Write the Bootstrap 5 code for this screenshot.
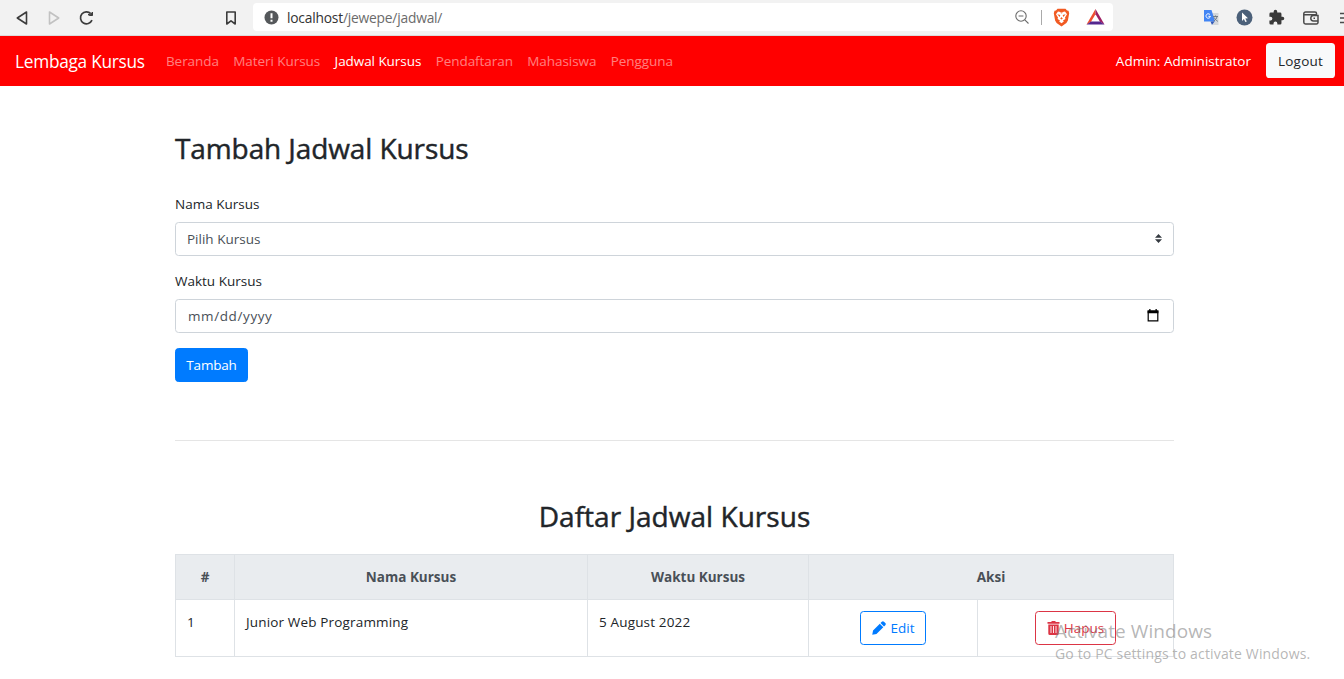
<!DOCTYPE html>
<html lang="id">
<head>
<meta charset="utf-8">
<meta name="viewport" content="width=device-width, initial-scale=1">
<title>Jadwal Kursus</title>
<link href="https://cdn.jsdelivr.net/npm/bootstrap@5.3.0/dist/css/bootstrap.min.css" rel="stylesheet">
<style>
:root{font-size:14.4px}
html,body{overflow:hidden}
body{font-family:"Open Sans","Noto Sans",sans-serif;font-size:13.5px;line-height:21.6px;color:#212529;background:#fff;height:679px}
.screen{width:1349px}
svg{display:block;flex:none}
.toolbar{height:36px;background:#f2f2f2;border-bottom:1px solid #dcdcdc;padding:0 0 0 15px}
.address{flex:none;width:860px;height:28px;margin:-1px 0 0 14px;background:#fff;border-radius:4px;padding:0 8px 0 11px;font-size:13.8px;color:#6b6b6b}
.address b{font-weight:400;color:#333}
.address .url{letter-spacing:-.21px;margin-left:8px;padding-top:1px}
.divider{width:1px;height:15px;background:#aaa;margin:0 11px}
.topnav{height:50px;background:red;padding:0 14px}
.topnav .navbar-brand{font-size:17.3px;margin-right:14px;padding:2px 0 0 1px;letter-spacing:-.28px}
.topnav .nav-link{padding:2px 7.2px 0;color:rgba(255,255,255,.5);white-space:nowrap;letter-spacing:-.06px}
.topnav .nav-link.active{color:#fff}
.who{padding-top:2px}
.logout{width:69px;height:35px;background:#f8f9fa;color:#212529;margin:-1px 0 0 15px;padding-top:1px;letter-spacing:.25px}
.btn{--bs-btn-font-size:13.5px;--bs-btn-padding-x:0;--bs-btn-padding-y:0;--bs-btn-border-radius:3.6px;display:inline-flex;align-items:center;justify-content:center}
.content{width:999px;margin-left:175px;padding-top:45px}
h2{font-size:28px;font-weight:500;line-height:34px;margin:0;-webkit-text-stroke:.45px #212529}
.title-add{letter-spacing:-.1px}
.title-list{letter-spacing:.03px}
.content label{display:block;line-height:22px;margin-bottom:7px}
.field{height:34px;border:1px solid #ced4da;border-radius:3.6px;color:#495057;padding:0 14px 0 11px}
.field span{padding-top:1px}
.field .date{letter-spacing:.6px;padding-left:1px}
.arrows{margin:-2px -3px 0 0}
.calendar{margin-top:-2px}
.add{width:73px;height:34px;--bs-btn-bg:#007bff;--bs-btn-border-color:#007bff;letter-spacing:-.2px}
.rule{height:1px;background:#e5e5e5;margin:58px 0}
.schedule{table-layout:fixed;width:998px;margin:21px 0 0;border-color:#dee2e6;font-size:13.5px;color:#212529}
.schedule th{height:45px;padding:2px 0 0;text-align:center;vertical-align:middle;background:#e9ecef;color:#495057;font-weight:700;border-bottom-width:1px}
.schedule td{height:57px;padding:12px 11px 10px;vertical-align:top;letter-spacing:.16px}
.schedule td.action{text-align:center;padding:11px 0 0;letter-spacing:0}
.edit{width:66px;height:34px;--bs-btn-color:#007bff;--bs-btn-border-color:#007bff;gap:5px}
.delete{width:81px;height:34px;--bs-btn-color:#dc3545;--bs-btn-border-color:#dc3545;gap:4px}
.watermark{position:absolute;left:1055px;top:619px;color:rgba(120,120,120,.55);white-space:nowrap}
.watermark .first{font-size:19px;line-height:24px;letter-spacing:.08px}
.watermark .second{font-size:14px;line-height:22px;letter-spacing:.16px}
</style>
</head>
<body>
<div class="screen">
<div class="toolbar d-flex align-items-center">
  <svg width="14" height="16" viewBox="0 0 14 16" fill="none" stroke="#3c3c3c" stroke-width="1.6" stroke-linejoin="round"><path d="M11.500 2v12L2.300 8z"/></svg>
  <svg style="margin-left:18px" width="14" height="16" viewBox="0 0 14 16" fill="none" stroke="#c2c2c2" stroke-width="1.6" stroke-linejoin="round"><path d="M2.500 2v12L11.700 8z"/></svg>
  <svg style="margin-left:16px" width="18" height="18" viewBox="0 0 18 18" fill="none" stroke="#3c3c3c" stroke-width="1.700"><path d="M15 11.200A6 6 0 1 1 13.800 4.600"/><path d="M11 5.500q3 1.500 4.500-2.500v3.500h-3z" fill="#3c3c3c" stroke-width="1"/></svg>
  <svg style="margin-left:128px" width="16" height="18" viewBox="0 0 16 18" fill="none" stroke="#3c3c3c" stroke-width="1.600" stroke-linejoin="round"><path d="M3.800 3h8.400v12L8 11.800 3.800 15z"/></svg>
  <div class="address d-flex align-items-center">
    <svg width="15" height="15" viewBox="0 0 15 15"><circle cx="7.500" cy="7.500" r="7" fill="#55585b"/><path d="M7.500 3.200v5M7.500 9.800v2" stroke="#fff" stroke-width="2"/></svg>
    <span class="url"><b>localhost</b>/jewepe/jadwal/</span>
    <svg class="ms-auto" width="16" height="16" viewBox="0 0 16 16" fill="none" stroke="#6b6b6b" stroke-width="1.100"><circle cx="7" cy="7" r="5.200"/><path d="M4.600 7h4.800M10.800 10.800l3.700 3.700"/></svg>
    <span class="divider"></span>
    <svg width="17" height="19" viewBox="0 0 17 19"><path d="M4.500.8h8l1.500 1.700 1.500.3.700 2.500-1.300 7.200-1.500 2.500-4.900 3.600-4.900-3.600-1.500-2.500L.8 5.300l.7-2.500L3 2.500z" fill="#f15a22"/><path d="M5 3.600l3.500.6 3.500-.6 2 2.600-2 3.200.4 1.600-2.400 1.600.8 1-2.300 1.700-2.300-1.700.8-1-2.400-1.600.4-1.600-2-3.200z" fill="#fff"/><path d="M4.300 6.300l3 .8-.6 2zM12.700 6.300l-3 .8.600 2zM8.500 9l1.300 1.700-1.300.8-1.300-.8zM7 4.500h3l-1.500 1z" fill="#f15a22"/></svg>
    <svg style="margin-left:16px" width="19" height="18" viewBox="0 0 19 18"><path d="M9.500 1L.5 16.500l4.500-2.800 4.500-7.500z" fill="#f04e30"/><path d="M9.500 1l9 15.500-4.500-2.800-4.500-7.500z" fill="#9e1f63"/><path d="M.5 16.500h18L14 13.500H5z" fill="#54278f"/></svg>
  </div>
  <svg style="margin-left:90px" width="17" height="17" viewBox="0 0 17 17"><path d="M7 4h8.500v12H10z" fill="#d4d7da"/><path d="M1 1h7.500l3.600 11.500H1z" fill="#4285f4"/><path d="M7.500 12.500h4L9 16z" fill="#3057b5"/><path d="M10 7.500h5M12.500 6.500v1M14 7.500c-.3 2-1.500 3.500-3.200 4.500M11.200 8.500c.7 1.700 2 3 3.600 3.800" fill="none" stroke="#737c85" stroke-width="1"/><path d="M7 5.700a2.200 2.200 0 1 0 .4 1.600H5.400" fill="none" stroke="#fff" stroke-width="1"/></svg>
  <svg style="margin-left:16px" width="17" height="17" viewBox="0 0 17 17"><circle cx="8.500" cy="8.500" r="8" fill="#4b6079"/><path d="M6 3.500l6 5.700-2.700.2 1.500 3-1.400.7-1.500-3L6 12z" fill="#fff"/></svg>
  <svg style="margin-left:15px" width="17" height="17" viewBox="0 0 24 24" fill="#3a3a3a"><path d="M20.500 11H19V7a2 2 0 0 0-2-2h-4V3.500a2.500 2.500 0 0 0-5 0V5H4a2 2 0 0 0-2 2v3.800h1.500a2.700 2.700 0 0 1 0 5.400H2V20a2 2 0 0 0 2 2h3.800v-1.500a2.700 2.700 0 0 1 5.400 0V22H17a2 2 0 0 0 2-2v-4h1.500a2.500 2.500 0 0 0 0-5z"/></svg>
  <svg style="margin-left:17px" width="18" height="16" viewBox="0 0 18 16" fill="none" stroke="#4a4a4a" stroke-width="1.500"><path d="M14.500 5V3.500A1.500 1.500 0 0 0 13 2H3.500a1.700 1.700 0 0 0-1.700 1.700v8.600A1.700 1.700 0 0 0 3.500 14h11a1.500 1.500 0 0 0 1.500-1.500V5.500H11.500a2.700 2.700 0 0 0 0 5.400H16M2 4.800h13"/><path d="M11.500 8.200h1.500"/></svg>
  <svg style="margin-left:20px" width="12" height="14" viewBox="0 0 12 14" stroke="#4a4a4a" stroke-width="1.600"><path d="M0 2.500h12M0 7h12M0 11.500h12"/></svg>
</div>

<nav class="navbar navbar-expand topnav flex-nowrap">
  <a class="navbar-brand text-white" href="#">Lembaga Kursus</a>
  <div class="navbar-nav me-auto">
    <a class="nav-link" href="#">Beranda</a>
    <a class="nav-link" href="#">Materi Kursus</a>
    <a class="nav-link active" href="#">Jadwal Kursus</a>
    <a class="nav-link" href="#">Pendaftaran</a>
    <a class="nav-link" href="#">Mahasiswa</a>
    <a class="nav-link" href="#">Pengguna</a>
  </div>
  <span class="text-white who">Admin: Administrator</span>
  <a class="btn logout" href="#">Logout</a>
</nav>

<main class="content">
  <h2 class="title-add">Tambah Jadwal Kursus</h2>
  <form style="padding-top:28px">
    <label>Nama Kursus</label>
    <div class="field d-flex align-items-center justify-content-between" style="margin-bottom:14px">
      <span>Pilih Kursus</span>
      <svg class="arrows" width="7" height="9" viewBox="0 0 7 9" fill="#343a40"><path d="M0 3.700L3.500 0 7 3.700zM0 5.300h7L3.500 9z"/></svg>
    </div>
    <label>Waktu Kursus</label>
    <div class="field d-flex align-items-center justify-content-between" style="margin-bottom:15px">
      <span class="date">mm/dd/yyyy</span>
      <svg class="calendar" width="12" height="13" viewBox="0 0 12 13"><path d="M1.200 2h9.600v9.800H1.200z" fill="none" stroke="#000" stroke-width="1.200"/><path d="M.6 1.400h10.800v2.800H.6zM2.200 0h1.300v2H2.200zM8.500 0h1.300v2H8.500z"/></svg>
    </div>
    <button type="button" class="btn btn-primary add">Tambah</button>
  </form>
  <div class="rule"></div>
  <h2 class="text-center title-list">Daftar Jadwal Kursus</h2>
  <table class="table table-bordered schedule">
    <colgroup><col style="width:59px"><col style="width:353px"><col style="width:221px"><col style="width:169px"><col style="width:196px"></colgroup>
    <thead><tr><th>#</th><th>Nama Kursus</th><th>Waktu Kursus</th><th colspan="2">Aksi</th></tr></thead>
    <tbody><tr>
      <td>1</td><td>Junior Web Programming</td><td>5 August 2022</td>
      <td class="action"><a class="btn btn-outline-primary edit" href="#"><svg width="14" height="14" viewBox="0 0 16 16" fill="currentColor"><path d="M11.200.8a1.800 1.800 0 0 1 2.500 0l1.500 1.500a1.800 1.800 0 0 1 0 2.500L13.700 6.300 9.700 2.300zM8.900 3.100l4 4-7.800 7.700L.3 15.800l.9-4.900z"/></svg><span>Edit</span></a></td>
      <td class="action"><a class="btn btn-outline-danger delete" href="#"><svg width="13" height="14" viewBox="0 0 13 14"><path d="M4.500 0h4v1H12.500v1.800H.5V1h4zM1.300 3.500h10.400V12.500A1.500 1.500 0 0 1 10.200 14H2.800a1.500 1.500 0 0 1-1.500-1.500z" fill="currentColor"/><path d="M4 5v7M6.500 5v7M9 5v7" stroke="#fff" stroke-width=".9"/></svg><span>Hapus</span></a></td>
    </tr></tbody>
  </table>
</main>
</div>
<div class="watermark"><div class="first">Activate Windows</div><div class="second">Go to PC settings to activate Windows.</div></div>
<script src="https://cdn.jsdelivr.net/npm/bootstrap@5.3.0/dist/js/bootstrap.bundle.min.js"></script>
</body>
</html>
